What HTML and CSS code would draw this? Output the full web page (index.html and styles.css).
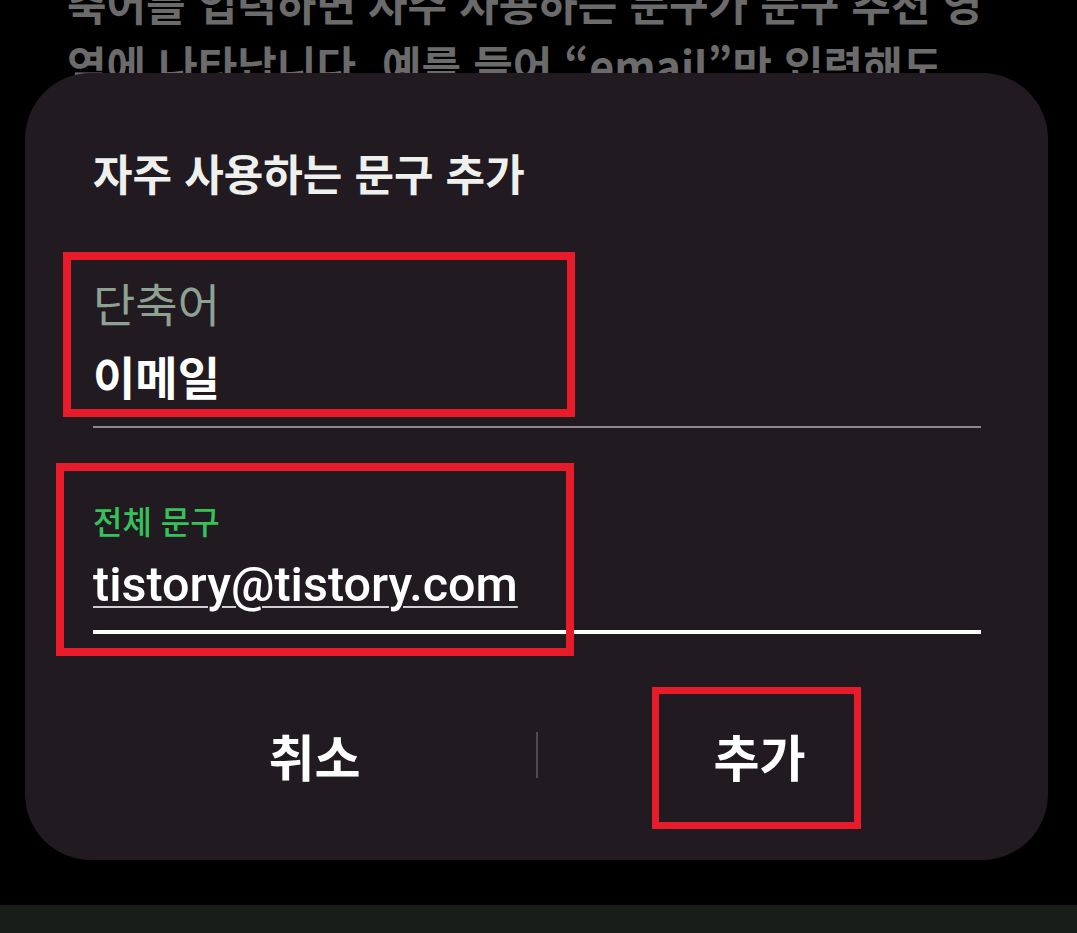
FILE: index.html
```html
<!DOCTYPE html>
<html lang="ko">
<head>
  <meta charset="UTF-8" />
  <meta name="viewport" content="width=device-width, initial-scale=1.0"/>
  <title>자주 사용하는 문구 추가</title>
  <link rel="stylesheet" href="styles.css">
</head>
<body>
  <div class="screen">
    <p class="bg-text">
      축어를 입력하면 자주 사용하는 문구가 문구 추천 영<br>
      역에 나타납니다. 예를 들어 “email”만 입력해도
    </p>
    <div class="nav-bar"></div>

    <div class="dialog">
      <h2 class="dialog-title">자주 사용하는 문구 추가</h2>

      <div class="field">
        <div class="field-label">단축어</div>
        <div class="field-value">이메일</div>
      </div>

      <div class="field field-active">
        <div class="field-label">전체 문구</div>
        <div class="field-value"><span class="typed">tistory@tistory.com</span></div>
      </div>

      <div class="actions">
        <button class="action">취소</button>
        <span class="action-divider"></span>
        <button class="action">추가</button>
      </div>

      <span class="mark mark-short"></span>
      <span class="mark mark-full"></span>
      <span class="mark mark-add"></span>
    </div>
  </div>
</body>
</html>
```

FILE: styles.css
```css
body {
  margin: 0;
  background: #000;
  font-family: "Noto Sans CJK KR", "Noto Sans", sans-serif;
}
.screen {
  position: relative;
  width: 1077px;
  height: 933px;
  overflow: hidden;
  display: flex;
  flex-direction: column;
}
.bg-text {
  margin: -29px 0 0;
  padding-left: 67px;
  font-size: 43px;
  font-weight: 700;
  line-height: 62px;
  color: #6b6b6b;
  white-space: nowrap;
}
.nav-bar {
  margin-top: auto;
  height: 28px;
  background: #181d1a;
}

/* modal */
.dialog {
  position: absolute;
  left: 25px;
  top: 73px;
  width: 1023px;
  box-sizing: border-box;
  padding: 75px 67px 55px 68px;
  background: #211a20;
  border-radius: 66px;
}
.dialog-title {
  margin: 0;
  font-size: 43px;
  font-weight: 700;
  line-height: 48px;
  color: #eef0ee;
}
.field {
  margin-top: 78px;
  padding-bottom: 23px;
  border-bottom: 2px solid #8b888d;
}
.field-label {
  font-size: 46px;
  line-height: 56px;
  color: #8ea294;
}
.field-value {
  margin-top: 17px;
  font-size: 46px;
  font-weight: 700;
  line-height: 56px;
  color: #fff;
}
.field-active {
  margin-top: 72px;
  padding-bottom: 17px;
  border-bottom: 4px solid #fff;
}
.field-active .field-label {
  font-size: 32px;
  font-weight: 500;
  line-height: 40px;
  color: #35c25a;
}
.field-active .field-value {
  font-family: Roboto, "Noto Sans", sans-serif;
  font-weight: 500;
  font-size: 48.5px;
}
.typed {
  text-decoration: underline;
  text-decoration-color: #cfcdd0;
  text-decoration-thickness: 2px;
  text-underline-offset: 5px;
}
.actions {
  margin-top: 71px;
  height: 100px;
  display: flex;
  align-items: center;
}
.action {
  flex: 1;
  padding: 0;
  border: 0;
  background: none;
  font-family: inherit;
  font-size: 50px;
  font-weight: 700;
  line-height: 56px;
  color: #fff;
}
.action-divider {
  width: 2px;
  height: 46px;
  background: #4f4a50;
}

/* annotation boxes */
.mark {
  position: absolute;
  box-sizing: border-box;
  border: 8px solid #e81b2b;
}
.mark-short {
  left: 38px;
  top: 179px;
  width: 512px;
  height: 165px;
}
.mark-full {
  left: 31px;
  top: 390px;
  width: 518px;
  height: 193px;
}
.mark-add {
  left: 627px;
  top: 614px;
  width: 209px;
  height: 142px;
  border-width: 7px;
}
```
